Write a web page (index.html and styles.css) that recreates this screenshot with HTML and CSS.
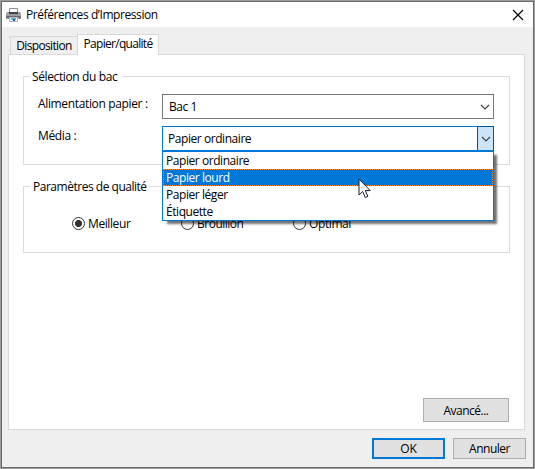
FILE: index.html
```html
<!DOCTYPE html>
<html lang="fr">
<head>
<meta charset="utf-8">
<title>Préférences d’Impression</title>
<link rel="stylesheet" href="styles.css">
</head>
<body>
<main class="window">
  <header class="titlebar">
    <svg class="printer" width="17" height="16" viewBox="0 0 17 16">
      <path d="M4.5 1.5h8v5h-8z" fill="#fff" stroke="#8b8f94"/>
      <path d="M2 5h13l1 2v5H1V7z" fill="#9a9da1"/>
      <path d="M4 5h9v2H4z" fill="#3f4347"/>
      <path d="M1 9h15v2H1z" fill="#6a6e73"/>
      <path d="M4.500 10.5h8v4h-8z" fill="#fff" stroke="#b0b4b8"/>
      <path d="M6 11h5v2H6z" fill="#62b3dc"/><path d="M8 12h2v2H8z" fill="#155f99"/>
    </svg>
    <h1 class="title">Préférences d’Impression</h1>
    <svg class="close" width="12" height="12" viewBox="0 0 12 12"><path d="M1 1l10 10M11 1L1 11" stroke="#000" stroke-width="1.2"/></svg>
  </header>
  <nav class="tabs">
    <span class="tab tab-disposition">Disposition</span>
    <span class="tab tab-active">Papier/qualité</span>
  </nav>
  <section class="panel">
    <section class="group tray">
      <h2 class="legend legend-tray">Sélection du bac</h2>
      <div class="row">
        <label class="label">Alimentation papier :</label>
        <div class="combo"><span>Bac 1</span>
          <span class="arrow"><svg width="10" height="6" viewBox="0 0 10 6"><path d="M1 1l4 4 4-4" fill="none" stroke="#444" stroke-width="1.2"/></svg></span>
        </div>
      </div>
      <div class="row">
        <label class="label">Média :</label>
        <div class="combo combo-open"><span>Papier ordinaire</span>
          <span class="arrow"><svg width="10" height="6" viewBox="0 0 10 6"><path d="M1 1l4 4 4-4" fill="none" stroke="#444" stroke-width="1.2"/></svg></span>
          <div class="list">
            <div class="option">Papier ordinaire</div>
            <div class="option selected">Papier lourd</div>
            <div class="option">Papier léger</div>
            <div class="option">Étiquette</div>
            <svg class="cursor" width="13" height="21" viewBox="0 0 13 21"><path d="M1 1v16l3.700-3.500 2.600 6 2.600-1.100-2.600-5.800h4.900z" fill="#fff" stroke="#1b1b2b"/></svg>
          </div>
        </div>
      </div>
    </section>
    <section class="group quality">
      <h2 class="legend legend-quality">Paramètres de qualité</h2>
      <div class="radios">
        <label class="radio radio-best"><i class="dot checked"></i><span>Meilleur</span></label>
        <label class="radio radio-draft"><i class="dot"></i><span>Brouillon</span></label>
        <label class="radio"><i class="dot"></i><span>Optimal</span></label>
      </div>
    </section>
    <button class="button advanced">Avancé...</button>
  </section>
  <footer class="actions">
    <button class="button ok">OK</button>
    <button class="button">Annuler</button>
  </footer>
</main>
</body>
</html>
```
FILE: styles.css
```css
* { box-sizing: border-box; }
body {
  margin: 0;
  padding: 1px;
  height: 469px;
  overflow: hidden;
  background: #9b9b9b;
  font: 12px/17px "Open Sans", "Noto Sans", sans-serif;
  letter-spacing: -.4px;
  color: #000;
}
h1, h2 { margin: 0; font: inherit; }
svg { display: block; }
span, label { white-space: nowrap; }
.window {
  display: flex;
  flex-direction: column;
  width: 533px;
  height: 467px;
  border: 1px solid #696969;
  background: #efefef;
}
.titlebar {
  display: flex;
  align-items: center;
  height: 25px;
  padding: 0 9px 0 3px;
  background: #fff;
}
.title { margin-left: 4px; white-space: nowrap; letter-spacing: -.42px; }
.close { margin-left: auto; }
.tabs {
  display: flex;
  align-items: flex-end;
  height: 28px;
  padding-left: 8px;
  margin-bottom: -1px;
}
.tab {
  height: 19px;
  border: 1px solid #d9d9d9;
  text-align: center;
  letter-spacing: -.65px;
}
.tab-disposition { width: 67px; border-right: 0; border-bottom: 0; }
.tab-active {
  position: relative;
  width: 82px;
  height: 21px;
  background: #fff;
  border-bottom: 0;
  letter-spacing: -.7px;
}
.panel {
  display: flex;
  flex-direction: column;
  width: 517px;
  height: 376px;
  margin-left: 6px;
  padding: 21px 15px 7px 14px;
  border: 1px solid #d9d9d9;
  background: #fff;
}
.group { border: 1px solid #dcdcdc; width: 487px; flex: none; }
.legend {
  height: 17px;
  margin-top: -9px;
  margin-left: 6px;
  padding-left: 2px;
  background: #fff;
}
.legend-tray { width: 92px; letter-spacing: -.38px; }
.legend-quality { width: 119px; padding-left: 3px; letter-spacing: -.48px; }
.tray { height: 89px; }
.row { display: flex; height: 25px; margin: 9px 0 0 14px; }
.row + .row { margin-top: 7px; }
.label { width: 124px; padding-top: 1px; line-height: 18px; letter-spacing: -.35px; }
.combo {
  position: relative;
  display: flex;
  align-items: center;
  justify-content: space-between;
  width: 332px;
  height: 25px;
  padding-left: 6px;
  border: 1px solid #777;
  background: #fff;
  letter-spacing: -.44px;
}
.combo-open { border-color: #0078d7; padding-left: 5px; }
.arrow {
  display: grid;
  place-items: center;
  width: 17px;
  height: 25px;
  padding-right: 1px;
  margin-right: -1px;
}
.combo-open .arrow { background: #cce4f7; border: 1px solid #00559b; padding: 0; }
.list {
  position: absolute;
  z-index: 2;
  top: 23px;
  left: -1px;
  width: 332px;
  height: 71px;
  border: 1px solid #0078d7;
  border-top-width: 2px;
  background: #fff;
  box-shadow: 4px 4px 2px -1px rgba(0, 0, 0, .55);
}
.option { height: 17px; line-height: 18px; padding-left: 3px; }
.selected {
  padding-left: 2px;
  line-height: 16px;
  background: #0078d7;
  border: 1px dotted #ff8728;
  color: #fff;
}
.cursor { position: absolute; left: 195px; top: 26px; }
.quality { height: 67px; margin-top: 21px; }
.radios { display: flex; padding: 20px 0 0 48px; }
.radio { display: flex; align-items: center; height: 17px; }
.radio-best { width: 109px; }
.radio-draft { width: 112px; letter-spacing: -.5px; }
.dot {
  width: 13px;
  height: 13px;
  margin-right: 3px;
  border: 1px solid #333;
  border-radius: 50%;
  background: #fff;
}
.checked { background: radial-gradient(circle, #333 0 3.2px, #fff 3.9px); }
.button {
  display: flex;
  justify-content: center;
  align-items: center;
  width: 73px;
  height: 21px;
  padding: 0;
  border: 1px solid #adadad;
  background: #e1e1e1;
  color: #000;
  font: inherit;
  letter-spacing: -.5px;
}
.advanced { width: 86px; height: 24px; margin: auto 0 0 auto; }
.actions { display: flex; justify-content: flex-end; gap: 8px; padding: 8px 7px 0 0; }
.ok { border: 2px solid #0078d7; letter-spacing: 0; }
```
